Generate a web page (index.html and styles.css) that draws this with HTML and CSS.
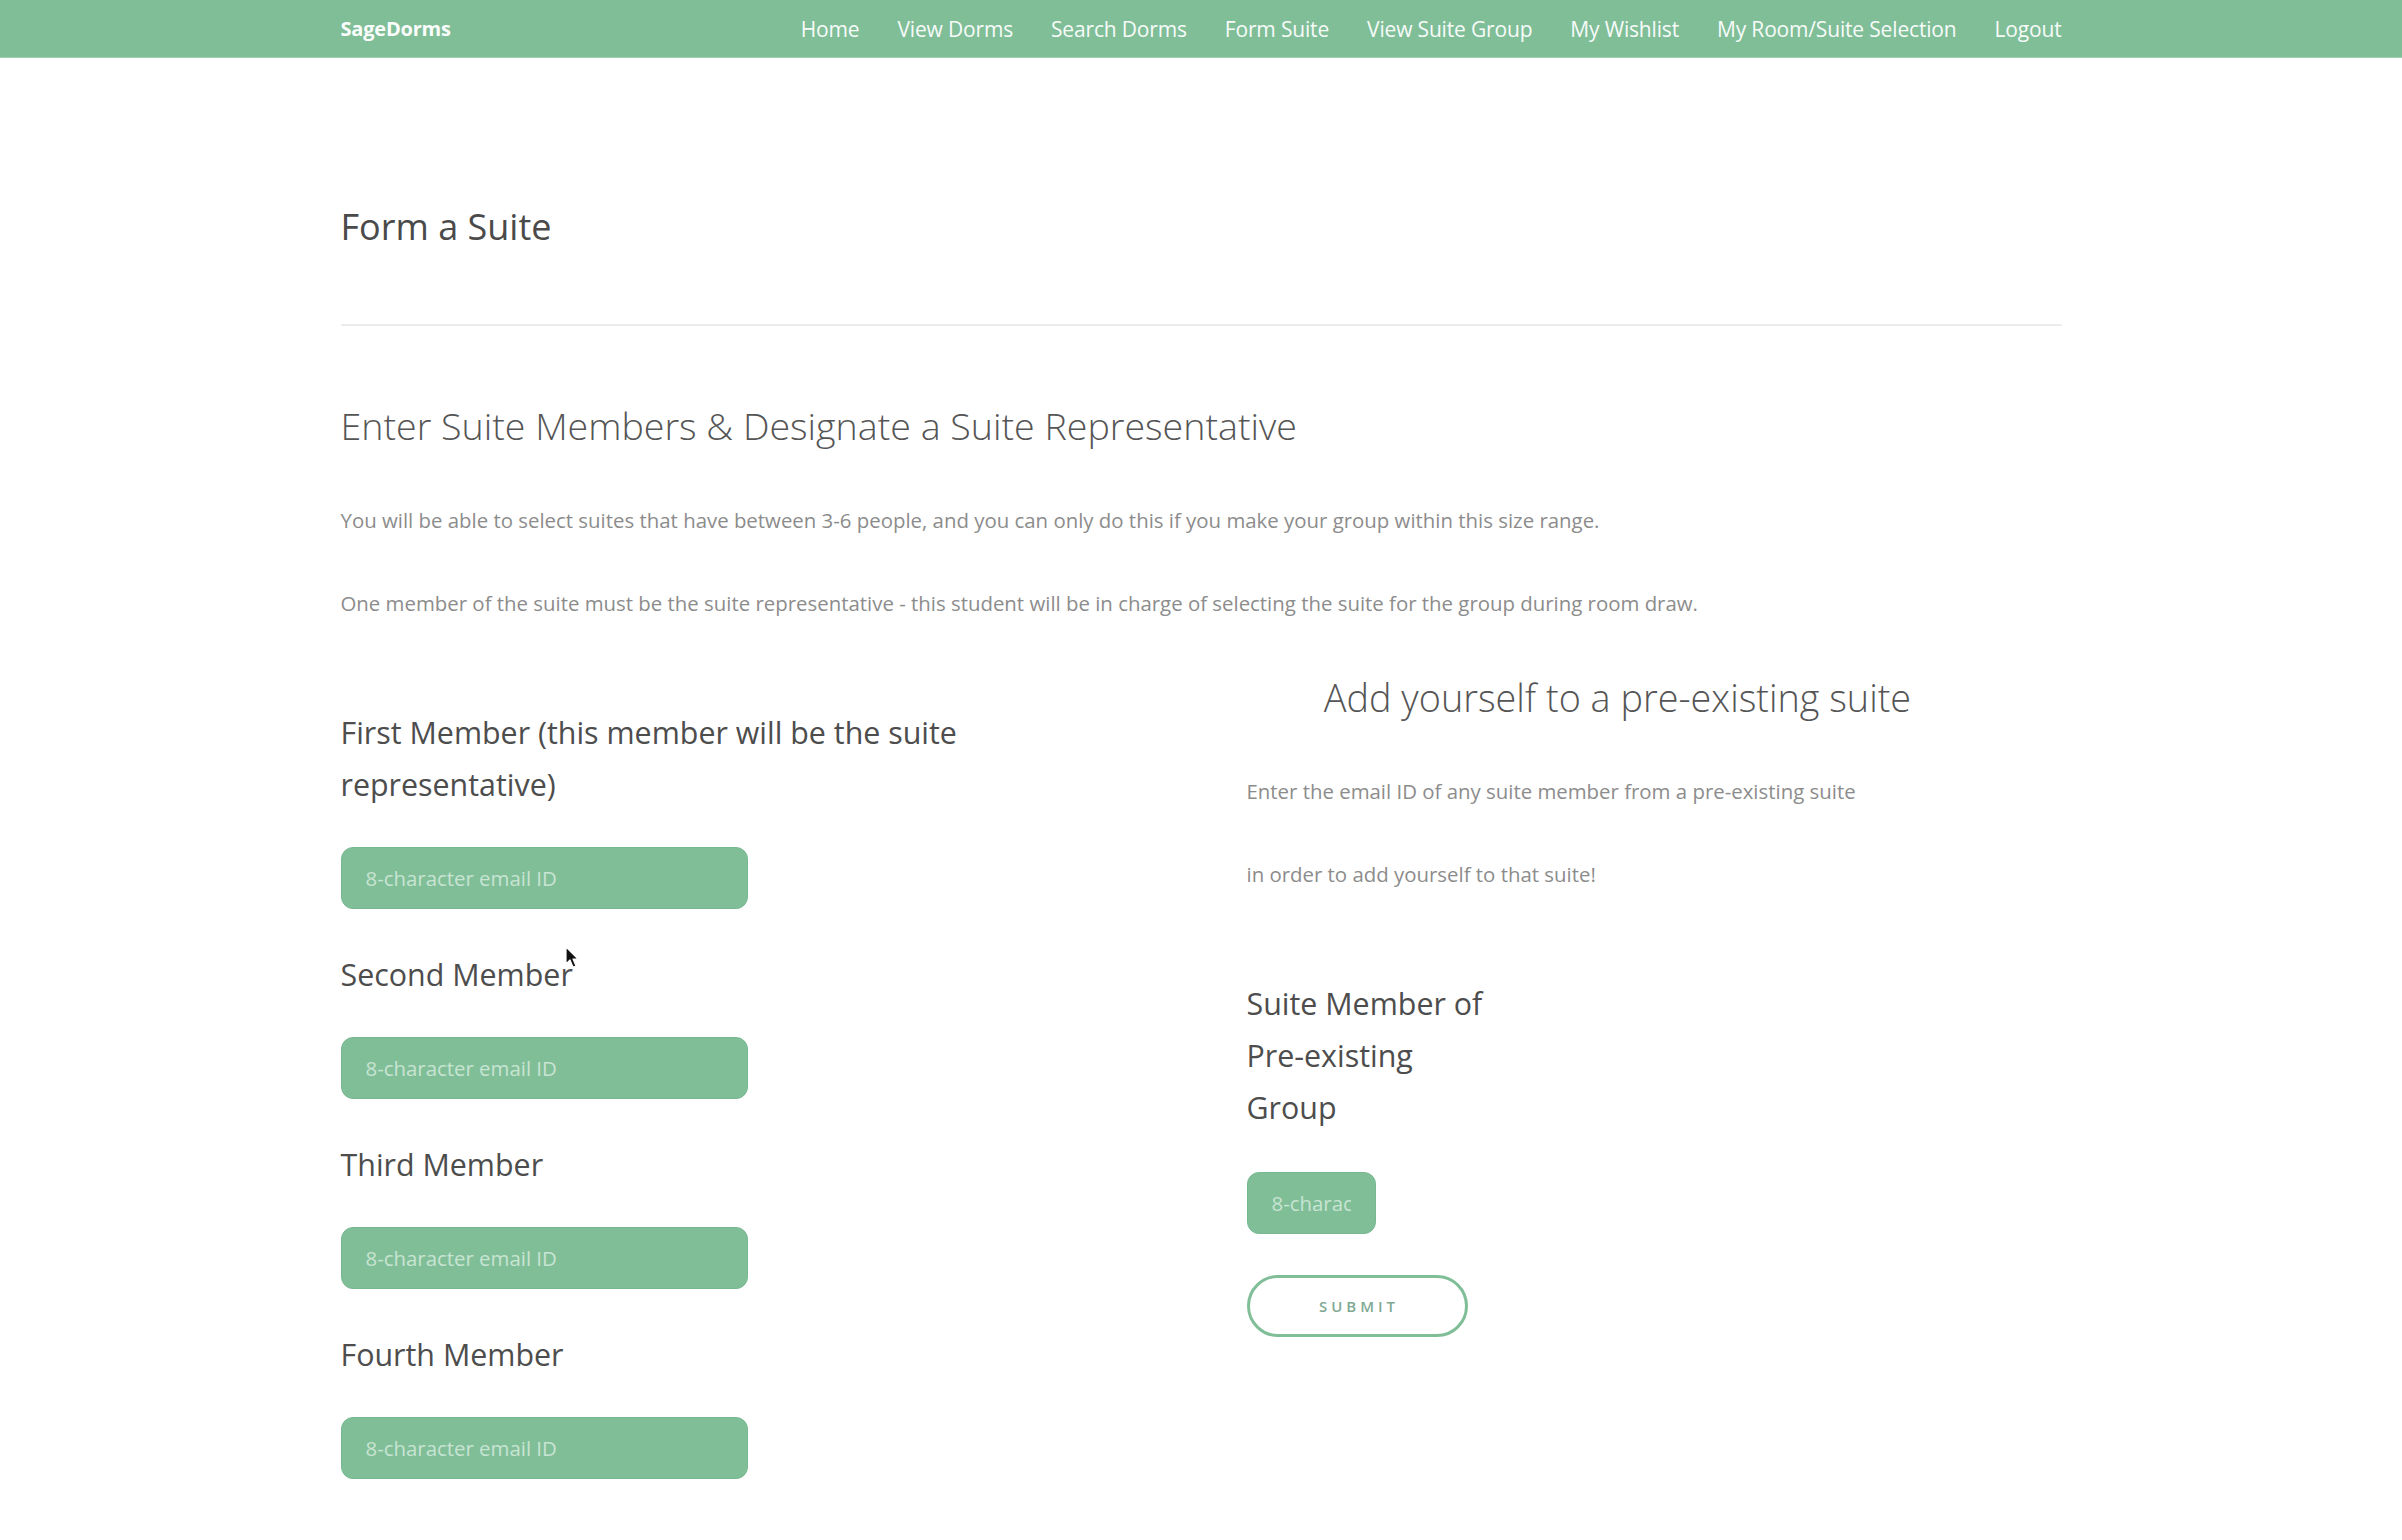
FILE: index.html
```html
<!DOCTYPE html>
<html lang="en">
<head>
<meta charset="utf-8">
<title>SageDorms - Form a Suite</title>
<link rel="stylesheet" href="styles.css">
</head>
<body>
<nav class="navbar">
  <div class="nav-inner">
    <a class="brand" href="#">SageDorms</a>
    <ul class="nav-links">
      <li><a href="#">Home</a></li>
      <li><a href="#">View Dorms</a></li>
      <li><a href="#">Search Dorms</a></li>
      <li><a href="#">Form Suite</a></li>
      <li><a href="#">View Suite Group</a></li>
      <li><a href="#">My Wishlist</a></li>
      <li><a href="#">My Room/Suite Selection</a></li>
      <li><a href="#">Logout</a></li>
    </ul>
  </div>
</nav>

<main class="container">
  <h1 class="page-title">Form a Suite</h1>
  <hr class="divider">
  <h2 class="section-title">Enter Suite Members &amp; Designate a Suite Representative</h2>
  <p class="info">You will be able to select suites that have between 3-6 people, and you can only do this if you make your group within this size range.</p>
  <p class="info">One member of the suite must be the suite representative - this student will be in charge of selecting the suite for the group during room draw.</p>

  <div class="row">
    <div class="col-left">
      <div class="field">
        <label class="field-label">First Member (this member will be the suite representative)</label>
        <input class="field-input" type="text" placeholder="8-character email ID">
      </div>
      <div class="field">
        <label class="field-label">Second Member</label>
        <input class="field-input" type="text" placeholder="8-character email ID">
      </div>
      <div class="field">
        <label class="field-label">Third Member</label>
        <input class="field-input" type="text" placeholder="8-character email ID">
      </div>
      <div class="field">
        <label class="field-label">Fourth Member</label>
        <input class="field-input" type="text" placeholder="8-character email ID">
      </div>
    </div>

    <div class="col-right">
      <h2 class="side-title">Add yourself to a pre-existing suite</h2>
      <p class="info side-info">Enter the email ID of any suite member from a pre-existing suite</p>
      <p class="info side-info">in order to add yourself to that suite!</p>
      <div class="field side-field">
        <label class="field-label narrow">Suite Member of Pre-existing Group</label>
        <input class="field-input small" type="text" placeholder="8-character email ID">
      </div>
      <button class="submit-btn" type="button">SUBMIT</button>
    </div>
  </div>
</main>

<svg class="cursor" width="16" height="24" viewBox="0 0 16 24" aria-hidden="true">
  <path d="M1 1 L1 18 L5 14 L8 21 L11 20 L8 13 L13 13 Z" fill="#111" stroke="#fff" stroke-width="1.2" stroke-linejoin="round"/>
</svg>
</body>
</html>
```

FILE: styles.css
```css
* {
  box-sizing: border-box;
}

html, body {
  margin: 0;
  padding: 0;
  background: #ffffff;
}

body {
  font-family: "Open Sans", "Noto Sans", "Liberation Sans", sans-serif;
  color: #4f4f4f;
  position: relative;
  min-height: 1540px;
}

/* Navbar */
.navbar {
  height: 58px;
  background: #80be98;
  border-bottom: 1px solid #9fd0b2;
}

.nav-inner {
  width: 1721px;
  margin: 0 auto;
  height: 100%;
  display: flex;
  align-items: center;
  justify-content: space-between;
}

.brand {
  color: #fbfdfc;
  font-weight: 700;
  font-size: 20px;
  text-decoration: none;
  letter-spacing: -0.2px;
}

.nav-links {
  list-style: none;
  margin: 0;
  padding: 0;
  display: flex;
  gap: 38px;
}

.nav-links a {
  color: #f6fbf8;
  text-decoration: none;
  font-size: 21px;
  font-weight: 400;
  letter-spacing: -0.17px;
}

/* Content */
.container {
  width: 1721px;
  margin: 0 auto;
}

.page-title {
  margin: 147px 0 0;
  font-size: 36px;
  line-height: 44px;
  font-weight: 400;
  color: #4a4a4a;
}

.divider {
  margin: 75px 0 0;
  border: 0;
  height: 2px;
  background: #ececec;
}

.section-title {
  margin: 76px 0 0;
  font-size: 37.6px;
  line-height: 48px;
  font-weight: 300;
  color: #555555;
}

.info {
  margin: 53px 0 0;
  font-size: 20.4px;
  line-height: 30px;
  color: #8c8c8c;
}

.section-title + .info {
  margin-top: 55px;
}

.row {
  display: flex;
  margin-top: 56px;
}

.col-left {
  width: 906px;
  padding-top: 33px;
}

.col-right {
  width: 742px;
}

.field {
  display: flex;
  flex-direction: column;
  align-items: flex-start;
}

.field + .field {
  margin-top: 40px;
}

.field-label {
  display: block;
  max-width: 640px;
  font-size: 30.4px;
  line-height: 52px;
  color: #4d4d4d;
}

.field-label.narrow {
  max-width: 258px;
}

.field-input {
  margin-top: 36px;
  width: 407px;
  height: 62px;
  padding: 0 24px;
  border: 1px solid #78b891;
  border-radius: 12px;
  background: #80be98;
  font-family: "Open Sans", "Noto Sans", "Liberation Sans", sans-serif;
  font-size: 20.4px;
  color: #ffffff;
  outline: none;
}

.field-input::placeholder {
  color: #c8e4d2;
}

.field-input.small {
  width: 129px;
  margin-top: 38px;
}

.side-title {
  margin: 0;
  text-align: center;
  font-size: 37.8px;
  line-height: 48px;
  font-weight: 300;
  color: #555555;
}

.side-title + .side-info {
  margin-top: 54px;
}

.side-field {
  margin-top: 89px;
}

.submit-btn {
  display: block;
  margin-top: 41px;
  width: 221px;
  height: 62px;
  border: 3px solid #80be98;
  border-radius: 31px;
  background: #ffffff;
  color: #80a994;
  font-family: "Open Sans", "Noto Sans", "Liberation Sans", sans-serif;
  font-size: 15px;
  font-weight: 600;
  letter-spacing: 4px;
  padding: 0 0 0 4px;
}

.cursor {
  position: absolute;
  left: 565px;
  top: 946px;
}
```
